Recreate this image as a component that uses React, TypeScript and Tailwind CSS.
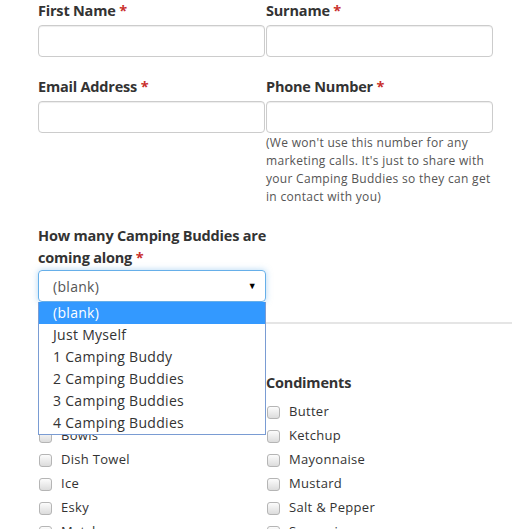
import React from "react";

const Req = () => <span className="text-[#c9302c] font-bold"> *</span>;

const Field = ({ label }: { label: string }) => (
  <div className="flex flex-col">
    <label className="text-[14.5px] leading-[22px] font-bold tracking-[-0.2px] text-[#333]">
      {label}
      <Req />
    </label>
    <input
      type="text"
      className="mt-[3px] h-[32px] w-[227px] rounded-[4px] border border-[#ccc] bg-white shadow-[inset_0_1px_1px_rgba(0,0,0,0.075)]"
    />
  </div>
);

const Check = ({ label }: { label: string }) => (
  <label className="flex h-[24px] items-center text-[13px] tracking-[0.3px] text-[#333]">
    <span className="mr-[9px] ml-[1px] h-[13px] w-[13px] rounded-[3px] border border-[#b5b5b5] bg-gradient-to-b from-[#fcfcfc] to-[#dcdcdc]" />
    {label}
  </label>
);

const OPTIONS = [
  "(blank)",
  "Just Myself",
  "1 Camping Buddy",
  "2 Camping Buddies",
  "3 Camping Buddies",
  "4 Camping Buddies",
];

export default function App() {
  return (
    <div className="min-h-[529px] bg-white pl-[38px] font-['Open_Sans',sans-serif]">
      <div className="grid w-[455px] grid-cols-[228px_227px]">
        <Field label="First Name" />
        <Field label="Surname" />
      </div>

      <div className="mt-[19px] grid w-[455px] grid-cols-[228px_227px]">
        <Field label="Email Address" />
        <div className="flex flex-col">
          <Field label="Phone Number" />
          <p className="mt-[1px] text-[12px] leading-[18px] tracking-[0.3px] text-[#555]">
            (We won't use this number for any marketing calls. It's just to
            share with your Camping Buddies so they can get in contact with
            you)
          </p>
        </div>
      </div>

      <div className="relative mt-[19px] w-[228px]">
        <label className="block text-[14.5px] leading-[22px] font-bold tracking-[-0.2px] text-[#333]">
          How many Camping Buddies are coming along
          <Req />
        </label>
        <div className="mt-[1px] flex h-[32px] w-[228px] items-center justify-between rounded-[4px] border border-[#66afe9] pr-[8px] pl-[14px] text-[14px] tracking-[0.3px] text-[#555] shadow-[0_0_6px_rgba(102,175,233,0.5)]">
          <span>(blank)</span>
          <span className="text-[9px] text-black">▼</span>
        </div>

        <ul className="absolute top-full left-0 z-10 w-[228px] border border-[#7a9cd3] bg-white text-[14px] tracking-[0.3px] text-[#333]">
          {OPTIONS.map((o, i) => (
            <li
              key={o}
              className={
                i === 0
                  ? "-mt-[1px] h-[22px] bg-[#3399ff] pl-[14px] leading-[21px] text-white"
                  : "h-[22px] pl-[14px] leading-[22px]"
              }
            >
              {o}
            </li>
          ))}
        </ul>
      </div>

      <hr className="mt-[20px] w-[474px] border-t-2 border-[#e5e5e5]" />

      <div className="mt-[48px] grid w-[455px] grid-cols-[228px_227px]">
        <div>
          <h4 className="text-[14.5px] leading-[22px] font-bold tracking-[-0.2px] text-[#333]">
            Utensils
          </h4>
          <div className="mt-[6px]">
            <Check label="BBQ Tongs" />
            <Check label="Bowls" />
            <Check label="Dish Towel" />
            <Check label="Ice" />
            <Check label="Esky" />
            <Check label="Matches" />
          </div>
        </div>
        <div>
          <h4 className="text-[14.5px] leading-[22px] font-bold tracking-[-0.2px] text-[#333]">
            Condiments
          </h4>
          <div className="mt-[6px]">
            <Check label="Butter" />
            <Check label="Ketchup" />
            <Check label="Mayonnaise" />
            <Check label="Mustard" />
            <Check label="Salt &amp; Pepper" />
            <Check label="Seasonings" />
          </div>
        </div>
      </div>
    </div>
  );
}
